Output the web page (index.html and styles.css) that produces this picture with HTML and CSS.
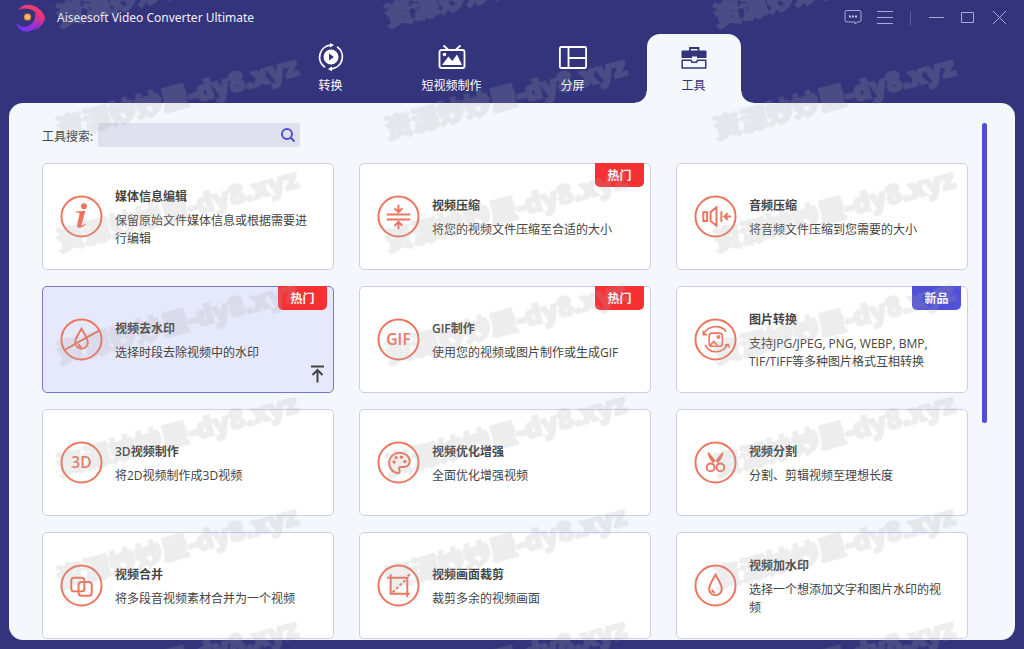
FILE: index.html
```html
<!DOCTYPE html>
<html lang="zh-CN">
<head>
<meta charset="utf-8">
<meta name="viewport" content="width=device-width, initial-scale=1">
<title>Aiseesoft Video Converter Ultimate</title>
<link rel="stylesheet" href="styles.css">
</head>
<body class="app">
<header class="titlebar">
  <svg class="logo" viewBox="0 0 30 28" aria-hidden="true">
    <defs>
      <linearGradient id="lg" x1="0" y1="0" x2="0" y2="1"><stop offset="0" stop-color="#ee3f73"/><stop offset=".55" stop-color="#e9307f"/><stop offset="1" stop-color="#7a2df0"/></linearGradient>
      <linearGradient id="lb" x1="0" y1="1" x2="1" y2="0"><stop offset="0" stop-color="#5a35f5"/><stop offset=".5" stop-color="#9a2fe0"/><stop offset="1" stop-color="#f0386a"/></linearGradient>
      <radialGradient id="lo"><stop offset="0" stop-color="#ffd36a"/><stop offset="1" stop-color="#f08a4a"/></radialGradient>
    </defs>
    <path fill="url(#lg)" d="M2 6C6 1 12-.5 18 2c5 2 9 6 10.500 10 .7 2 .3 4-.8 6-2 4-6 7.500-10 8.500 4-4 6-8 5-13C21.500 7 12 2 2 6z"/>
    <path fill="url(#lb)" d="M0 19c4 4 10 5 14 2 4-2.500 6-7 5-13 4 3 5 8 3 12-3 6-8 8-13 7.500C5 27 1.500 24 0 19z"/>
    <circle cx="11.500" cy="13" r="3.500" fill="url(#lo)"/>
  </svg>
  <h1 class="app-name">Aiseesoft Video Converter Ultimate</h1>
  <div class="controls">
    <button class="control" type="button" aria-label="反馈"><svg viewBox="0 0 18 18"><path d="M3 1.500h12q2 0 2 2v7.500q0 2-2 2h-1.500L11 15v-2H3q-2 0-2-2V3.500q0-2 2-2z"/><path class="dots" d="M5 6.500h2v2H5zM8 6.500h2v2H8zM11 6.500h2v2h-2z"/></svg></button>
    <button class="control" type="button" aria-label="菜单"><svg viewBox="0 0 18 18"><path d="M1 2.500h16M1 8.500h16M1 14.500h16"/></svg></button>
    <span class="divider"></span>
    <button class="control" type="button" aria-label="最小化"><svg viewBox="0 0 18 18"><path d="M2 8.500h15"/></svg></button>
    <button class="control" type="button" aria-label="最大化"><svg viewBox="0 0 18 18"><path d="M2.500 3.500h12v10h-12z"/></svg></button>
    <button class="control" type="button" aria-label="关闭"><svg viewBox="0 0 18 18"><path d="M2 2l13 13M15 2L2 15"/></svg></button>
  </div>
</header>

<nav class="tabs">
  <button class="tab" type="button">
    <svg class="tab-icon" viewBox="0 0 28 28" aria-hidden="true"><g fill="none" stroke="currentColor" stroke-width="1.800"><path d="M8 24.200A12 12 0 0 1 14 2.200"/><path d="M20 3.800A12 12 0 0 1 14 25.800"/></g><path fill="currentColor" d="M13 0l4 2-4 2.500zM15 23.500v5l-4-2.500z"/><path fill="currentColor" fill-rule="evenodd" d="M14 6.500a7.500 7.500 0 1 1 0 15 7.500 7.500 0 0 1 0-15zM12 10.500v7l5-3.500z"/></svg>
    <span>转换</span>
  </button>
  <button class="tab" type="button">
    <svg class="tab-icon" viewBox="0 0 28 28" aria-hidden="true"><g fill="none" stroke="currentColor" stroke-width="1.800"><rect x="1.500" y="7" width="25" height="18" rx="2"/><path d="M5.500 2.500L10 6.500M22.500 2.500L18 6.500"/></g><circle cx="6.500" cy="11.500" r="1.800" fill="currentColor"/><path fill="currentColor" d="M4 22l6.500-8.500 3.800 4.500L19 11.500 24 22z"/></svg>
    <span>短视频制作</span>
  </button>
  <button class="tab" type="button">
    <svg class="tab-icon" viewBox="0 0 28 28" aria-hidden="true"><g fill="none" stroke="currentColor" stroke-width="1.800"><rect x="0.900" y="4" width="26.200" height="21" rx="1.500"/><path d="M9.500 4v21M9.500 15H27"/></g></svg>
    <span>分屏</span>
  </button>
  <button class="tab tab-active" type="button" aria-current="page">
    <svg class="tab-icon" viewBox="0 0 28 28" aria-hidden="true"><path fill="none" stroke="currentColor" stroke-width="1.800" d="M10 8V5h8.500v3"/><path fill="currentColor" d="M2.500 7.500h23q1 0 1 1v6.500h-9.500v-1.500h-5V15H1.500V8.500q0-1 1-1z"/><path fill="none" stroke="currentColor" stroke-width="1.500" d="M11 17.300H2.200V25h23.500v-7.700H17.500l-1 2h-4.500z"/></svg>
    <span>工具</span>
  </button>
</nav>

<main class="panel">
  <div class="content">
    <form class="search">
      <label for="tool-search">工具搜索:</label>
      <div class="search-box">
        <input id="tool-search" type="text">
        <button type="submit" aria-label="搜索"><svg viewBox="0 0 16 16"><circle cx="7" cy="7" r="5"/><path d="M10.800 10.800l3.700 3.700"/></svg></button>
      </div>
    </form>

    <div class="grid">
      <article class="card">
        <svg class="card-icon" viewBox="0 0 44 44" aria-hidden="true"><circle cx="22" cy="22" r="20.500"/><g class="solid"><circle cx="24.500" cy="11.500" r="3"/><path d="M16.500 17l9.500-1-3.800 14c-.4 1.800.8 2 3.500-.8l.8.800c-3.300 4.500-10 5-9 .5L20 19.500c.2-1-.5-1.500-3.500-1.300z"/></g></svg>
        <div class="card-text"><h2>媒体信息编辑</h2><p>保留原始文件媒体信息或根据需要进行编辑</p></div>
      </article>
      <article class="card">
        <svg class="card-icon" viewBox="0 0 44 44" aria-hidden="true"><circle cx="22" cy="22" r="20.500"/><path d="M10 20h24M10 25h24M22 10v7M18 13.500l4 4 4-4M22 35v-7M18 31.500l4-4 4 4"/></svg>
        <div class="card-text"><h2>视频压缩</h2><p>将您的视频文件压缩至合适的大小</p></div>
        <span class="badge">热门</span>
      </article>
      <article class="card">
        <svg class="card-icon" viewBox="0 0 44 44" aria-hidden="true"><circle cx="22" cy="22" r="20.500"/><path d="M9.500 17.500h4v9h-4zM17 17.500l6-5v19l-6-5zM28 16.500v11M38 22h-7M34.500 18.500L31 22l3.500 3.500"/></svg>
        <div class="card-text"><h2>音频压缩</h2><p>将音频文件压缩到您需要的大小</p></div>
      </article>

      <article class="card card-selected">
        <svg class="card-icon" viewBox="0 0 44 44" aria-hidden="true"><circle cx="22" cy="22" r="20.500"/><path d="M22 11c-3 5.500-6.500 9-6.500 14a6.500 6.500 0 0 0 13 0c0-5-3.500-8.500-6.500-14zM4 33L40 13M19 26.500c.5 2 1.500 3 3 3.200"/></svg>
        <div class="card-text"><h2>视频去水印</h2><p>选择时段去除视频中的水印</p></div>
        <span class="badge">热门</span>
        <button class="pin" type="button" aria-label="置顶"><svg viewBox="0 0 16 18"><path d="M2 1.500h13M8.500 17.500V5M3.500 10l5-5 5 5"/></svg></button>
      </article>
      <article class="card">
        <svg class="card-icon" viewBox="0 0 44 44" aria-hidden="true"><circle cx="22" cy="22" r="20.500"/><text class="icon-label" x="22" y="28">GIF</text></svg>
        <div class="card-text"><h2>GIF制作</h2><p>使用您的视频或图片制作或生成GIF</p></div>
        <span class="badge">热门</span>
      </article>
      <article class="card">
        <svg class="card-icon" viewBox="0 0 44 44" aria-hidden="true"><circle cx="22" cy="22" r="20.500"/><g class="fine"><rect x="15.500" y="15.500" width="13.500" height="13.500" rx="3"/><circle cx="25" cy="19.500" r="1.300"/><path d="M17 27.500l3.200-3.500 3.800 4M9.500 13v4h4M10 16.500C14 7 27.500 6.500 33 14M11.500 27.500C16 37.500 29.500 36.500 34.500 27M31.500 28l3.500-1 1.500 3.500"/></g></svg>
        <div class="card-text"><h2>图片转换</h2><p>支持JPG/JPEG, PNG, WEBP, BMP, TIF/TIFF等多种图片格式互相转换</p></div>
        <span class="badge badge-new">新品</span>
      </article>

      <article class="card">
        <svg class="card-icon" viewBox="0 0 44 44" aria-hidden="true"><circle cx="22" cy="22" r="20.500"/><text class="icon-label" x="22" y="28">3D</text></svg>
        <div class="card-text"><h2>3D视频制作</h2><p>将2D视频制作成3D视频</p></div>
      </article>
      <article class="card">
        <svg class="card-icon" viewBox="0 0 44 44" aria-hidden="true"><circle cx="22" cy="22" r="20.500"/><path d="M21.500 33C15 32 12 26.500 12.500 21.500 13 16 17.500 12 23 12c6 0 10.500 4 10.500 8.500 0 4-3 6-6 6h-3.500c-2 0-1.500 2-1 3.500.5 1.800 0 3-1.500 3z"/><g class="solid"><circle cx="17.500" cy="21.500" r="1.700"/><circle cx="19.500" cy="17" r="1.700"/><circle cx="25" cy="16.500" r="1.700"/><circle cx="28.500" cy="21" r="1.700"/></g></svg>
        <div class="card-text"><h2>视频优化增强</h2><p>全面优化增强视频</p></div>
      </article>
      <article class="card">
        <svg class="card-icon" viewBox="0 0 44 44" aria-hidden="true"><circle cx="22" cy="22" r="20.500"/><circle cx="17" cy="27" r="4"/><circle cx="27" cy="27" r="4"/><path class="solid" d="M14 11l2.500 2L24.500 23l-2.500 2.500C18 21 14 17 14 11zM30 11l-2.500 2L19.500 23l2.500 2.500C26 21 30 17 30 11z"/></svg>
        <div class="card-text"><h2>视频分割</h2><p>分割、剪辑视频至理想长度</p></div>
      </article>

      <article class="card">
        <svg class="card-icon" viewBox="0 0 44 44" aria-hidden="true"><circle cx="22" cy="22" r="20.500"/><rect x="11.500" y="14" width="13.500" height="14" rx="3"/><rect x="19" y="18.500" width="13.500" height="14" rx="3"/></svg>
        <div class="card-text"><h2>视频合并</h2><p>将多段音视频素材合并为一个视频</p></div>
      </article>
      <article class="card">
        <svg class="card-icon" viewBox="0 0 44 44" aria-hidden="true"><circle cx="22" cy="22" r="20.500"/><path d="M14 10.500V30.500H33.500M10.500 14H31V34M31.500 12.500l2-2"/><path stroke-dasharray="3 2" d="M16 29L29.500 16"/></svg>
        <div class="card-text"><h2>视频画面裁剪</h2><p>裁剪多余的视频画面</p></div>
      </article>
      <article class="card">
        <svg class="card-icon" viewBox="0 0 44 44" aria-hidden="true"><circle cx="22" cy="22" r="20.500"/><path d="M22 11c-3 5.500-6.500 10-6.500 14.500a6.500 6.500 0 0 0 13 0c0-4.500-3.500-9-6.500-14.500zM18.500 26c.3 2 1.300 3 3 3.300"/></svg>
        <div class="card-text"><h2>视频加水印</h2><p>选择一个想添加文字和图片水印的视频</p></div>
      </article>
    </div>
  </div>
  <div class="scrollbar"></div>
</main>

<svg class="watermark" aria-hidden="true">
  <defs>
    <pattern id="wm" x="14" y="42" width="328.500" height="112.400" patternUnits="userSpaceOnUse">
      <text transform="translate(46 97) rotate(-15)">资源妙妙屋-dy8.xyz</text>
    </pattern>
  </defs>
  <rect width="100%" height="100%" fill="url(#wm)"/>
</svg>
</body>
</html>
```
FILE: styles.css
```css
* {
  box-sizing: border-box;
}

body,
h1,
h2,
p {
  margin: 0;
}

button,
input {
  padding: 0;
  border: 0;
  background: none;
  color: inherit;
  font: inherit;
}

svg {
  display: block;
}

.app {
  position: relative;
  display: flex;
  flex-direction: column;
  min-height: 100vh;
  background: #34347c;
  color: #444;
  font: 12px/18px "Open Sans", "Noto Sans CJK SC", sans-serif;
}

.titlebar {
  display: flex;
  align-items: center;
  height: 34px;
  padding: 2px 15px 0 16px;
  color: #f0f0fa;
}

.logo {
  width: 30px;
  height: 28px;
}

.app-name {
  margin-left: 11px;
  flex: 1;
  font: 400 12px/18px "Noto Sans", sans-serif;
}

.controls {
  display: flex;
  align-items: center;
  gap: 14px;
}

.control {
  width: 18px;
  height: 18px;
}

.control path {
  fill: none;
  stroke: #a9a9dc;
}

.control .dots {
  fill: #c4c4e8;
  stroke: none;
}

.divider {
  width: 1px;
  height: 15px;
  margin: 0 2px;
  background: #5c5ca0;
}

.tabs {
  display: flex;
  justify-content: center;
  gap: 27px;
  height: 69px;
}

.tab {
  position: relative;
  display: flex;
  flex-direction: column;
  align-items: center;
  gap: 6px;
  width: 94px;
  padding-top: 9px;
  color: #fff;
}

.tab-icon {
  width: 28px;
  height: 28px;
}

.tab-active {
  border-radius: 13px 13px 0 0;
  background: #f4f7fc;
  color: #34347c;
}

.tab-active::before,
.tab-active::after {
  content: "";
  position: absolute;
  bottom: 0;
  width: 12px;
  height: 12px;
}

.tab-active::before {
  right: 100%;
  background: radial-gradient(circle at 0 0, transparent 11px, #f4f7fc 12px);
}

.tab-active::after {
  left: 100%;
  background: radial-gradient(circle at 100% 0, transparent 11px, #f4f7fc 12px);
}

.panel {
  display: flex;
  flex: 1;
  gap: 14px;
  margin: 0 9px 9px;
  padding: 20px 28px 0 33px;
  border-radius: 14px;
  background: #f4f7fc;
}

.content {
  display: flex;
  flex: 1;
  flex-direction: column;
  gap: 16px;
}

.search {
  display: flex;
  align-items: center;
  gap: 5px;
  height: 24px;
}

.search label {
  padding-top: 4px;
}

.search-box {
  display: flex;
  align-items: center;
  width: 202px;
  height: 24px;
  padding-right: 4px;
  border-radius: 2px;
  background: #dfe1ef;
}

.search-box input {
  flex: 1;
  min-width: 0;
  height: 24px;
  padding: 0 6px;
}

.search-box svg {
  width: 16px;
  height: 16px;
  fill: none;
  stroke: #5050cf;
  stroke-width: 2;
}

.grid {
  display: grid;
  grid-template-columns: repeat(3, 1fr);
  gap: 16px 25px;
}

.card {
  position: relative;
  display: flex;
  align-items: center;
  gap: 12px;
  min-height: 107px;
  padding: 0 20px 0 17px;
  border: 1px solid #cdcdeb;
  border-radius: 5px;
  background: #fff;
}

.card-selected {
  border-color: #7676cc;
  background: #e6e8fc;
}

.card-icon {
  flex: none;
  width: 43px;
  height: 43px;
  fill: none;
  stroke: #ee745d;
  stroke-width: 2;
}

.card-icon .fine {
  stroke-width: 1.6;
}

.card-icon .solid,
.icon-label {
  fill: #ee745d;
  stroke: none;
}

.icon-label {
  font: 600 16px "Open Sans", sans-serif;
  text-anchor: middle;
}

.card-text {
  padding-top: 3px;
}

.card-text h2 {
  margin-bottom: 6px;
  font-size: 12px;
  font-weight: 600;
}

.badge {
  position: absolute;
  top: -1px;
  right: 6px;
  width: 49px;
  height: 24px;
  padding-top: 2px;
  border-radius: 0 0 5px 5px;
  background: #f73034;
  color: #fff;
  font-weight: 600;
  line-height: 22px;
  text-align: center;
}

.badge-new {
  background: #5050d8;
}

.pin {
  position: absolute;
  right: 8px;
  bottom: 9px;
}

.pin svg {
  width: 16px;
  height: 18px;
  fill: none;
  stroke: #444;
  stroke-width: 2;
}

.scrollbar {
  width: 5px;
  height: 300px;
  border-radius: 3px;
  background: #5050cf;
}

.watermark {
  position: absolute;
  top: 0;
  left: 0;
  width: 100%;
  height: 100%;
  opacity: 0.2;
  pointer-events: none;
}

.watermark text {
  fill: #aaa;
  stroke: #aaa;
  stroke-width: 2px;
  font: 800 27px "Open Sans", "Noto Sans CJK SC", sans-serif;
}
```
